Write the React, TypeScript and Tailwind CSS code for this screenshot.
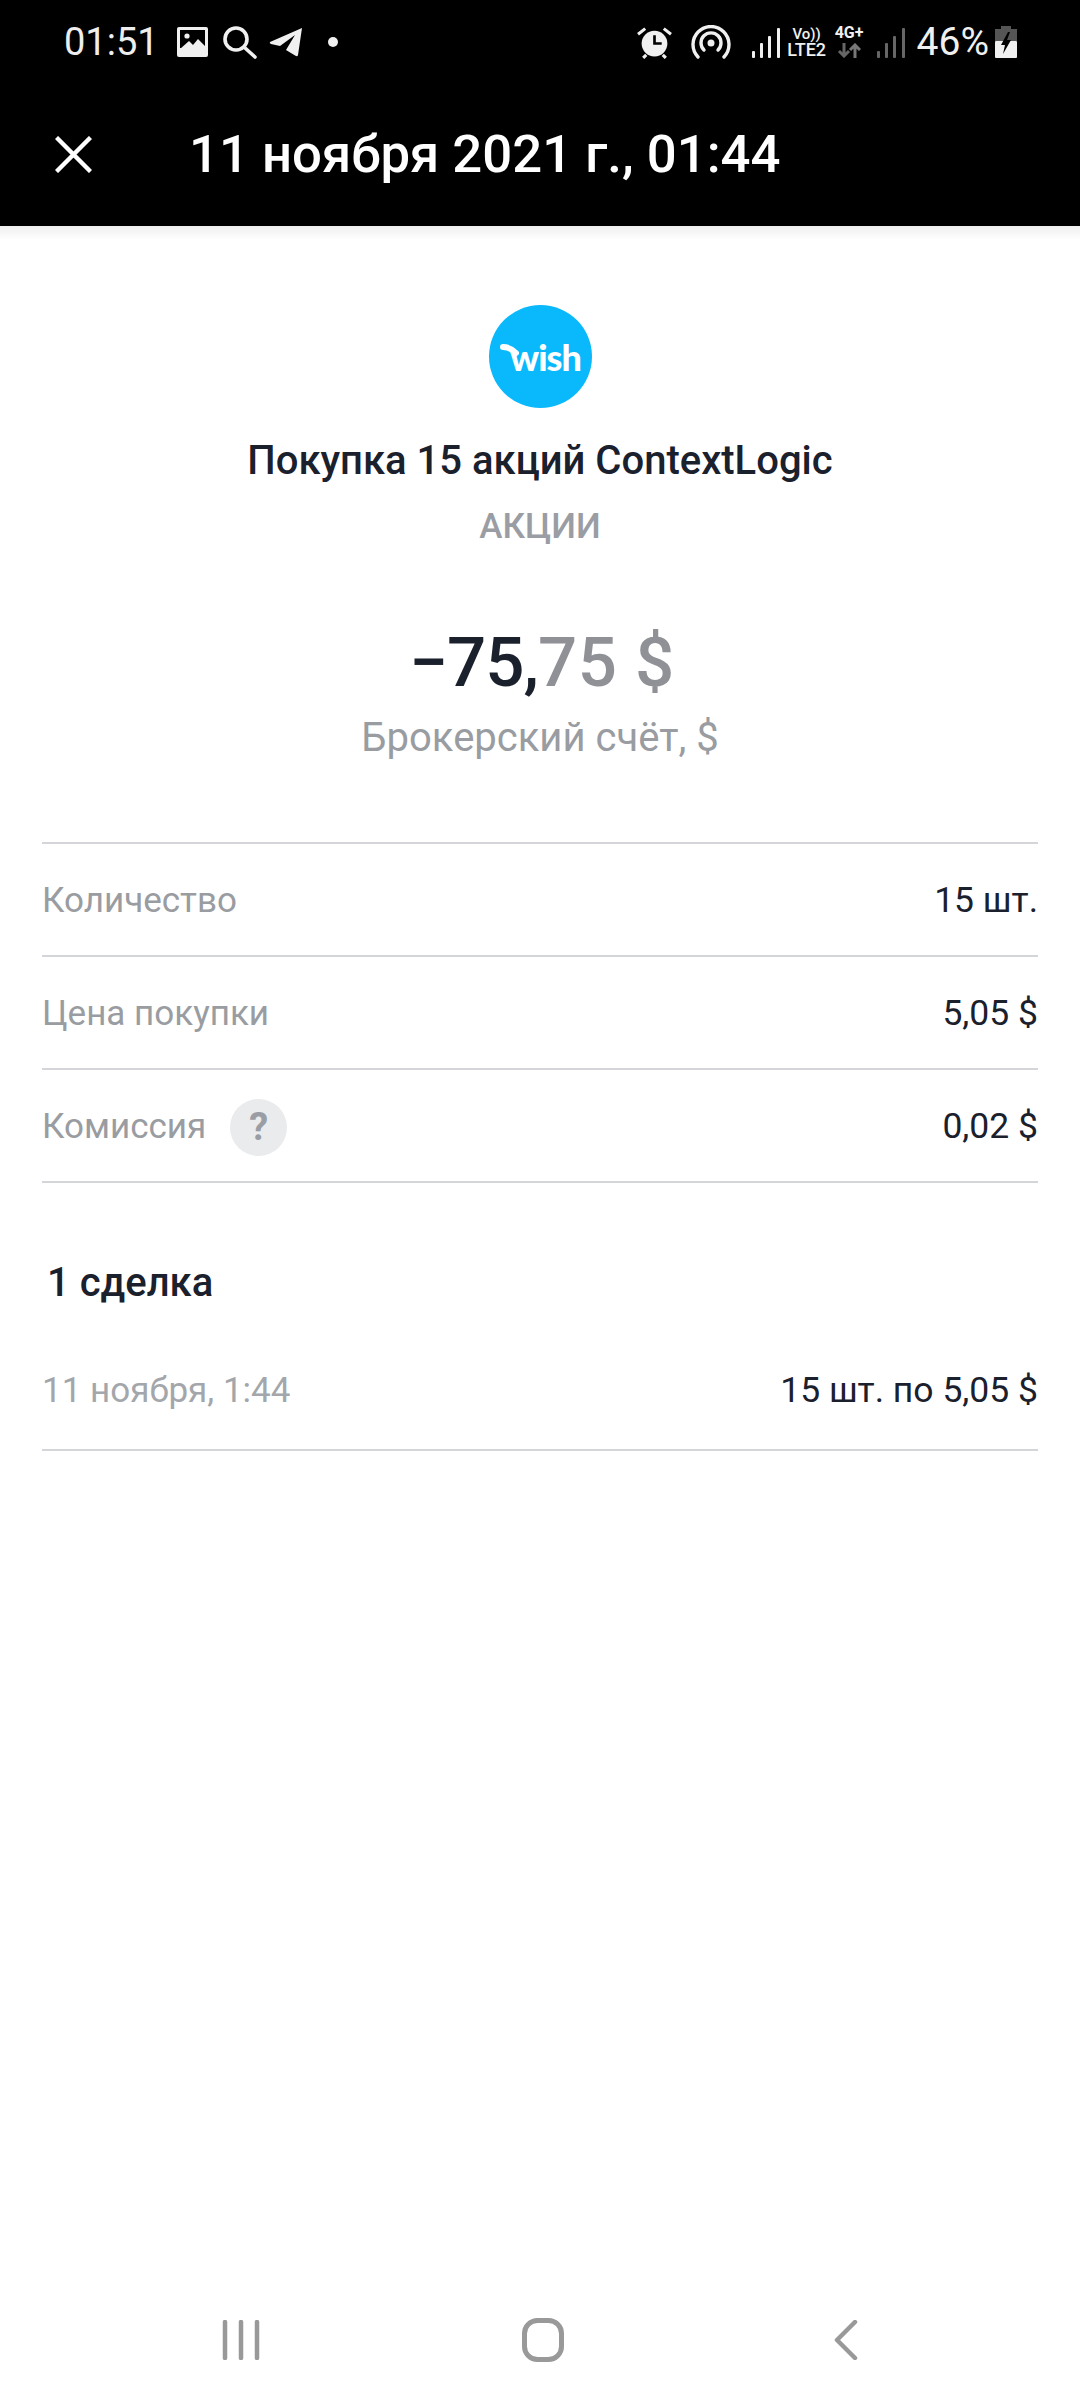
import React from 'react';

const font = { fontFamily: 'Roboto, "Noto Sans", sans-serif' };

function SignalBars({ className }: { className: string }) {
  return (
    <svg viewBox="0 0 28 30" className={className} fill="currentColor">
      <rect x="0" y="23" width="3" height="7" rx="1" />
      <rect x="8" y="15" width="3" height="15" rx="1" />
      <rect x="16" y="8" width="3" height="22" rx="1" />
      <rect x="25" y="0" width="3" height="30" rx="1" />
    </svg>
  );
}

function LeftIcons() {
  return (
    <div className="flex items-center">
      {/* gallery */}
      <svg viewBox="0 0 31 30" className="ml-[18px] w-[31px] h-[30px]">
        <rect width="31" height="30" rx="2" fill="#f0f0f0" />
        <rect x="3" y="3" width="25" height="18" fill="#000" />
        <circle cx="10" cy="9" r="2.6" fill="#f0f0f0" />
        <path d="M3 22 L12 14 L16 18 L21 12 L28 19 V24 H3 Z" fill="#f0f0f0" />
      </svg>
      {/* search */}
      <svg viewBox="0 0 35 34" className="ml-[14px] w-[35px] h-[34px]" fill="none" stroke="#f0f0f0" strokeWidth="3.6" strokeLinecap="round">
        <circle cx="14" cy="14" r="11" />
        <path d="M22.5 22.5 L33 32" />
      </svg>
      {/* telegram */}
      <svg viewBox="0 0 34 30" className="ml-[12px] w-[34px] h-[30px]" fill="#f0f0f0">
        <path d="M1 15 L33 1 L29 28 Q28.5 30 26.500 28.800 L17 23 L26 8 L11 19 L2 17 Q0 16 1 15 Z" />
      </svg>
      <span className="ml-[25px] w-[10px] h-[10px] rounded-full bg-[#f0f0f0]" />
    </div>
  );
}

function RightIcons() {
  return (
    <div className="ml-auto mr-[63px] flex items-center">
      {/* alarm */}
      <svg viewBox="0 0 34 32" className="w-[35px] h-[33px]">
        <circle cx="17" cy="17" r="12.5" fill="#f0f0f0" />
        <path d="M17 9 V17 H24" fill="none" stroke="#000" strokeWidth="2.6" />
        <path d="M1 8 L8 2.500 M33 8 L26 2.500 M6 31 L9 28 M28 31 L25 28" stroke="#f0f0f0" strokeWidth="3" />
      </svg>
      {/* hotspot */}
      <svg viewBox="0 0 40 34" className="ml-[19px] w-[40px] h-[34px]" fill="none" stroke="#f0f0f0" strokeWidth="3.4" strokeLinecap="round">
        <path d="M7 32 A 18 18 0 1 1 33 32" />
        <path d="M13 25 A 10 10 0 1 1 27 25" />
        <circle cx="20" cy="18" r="3.500" fill="#f0f0f0" stroke="none" />
      </svg>
      <SignalBars className="ml-[21px] w-[28px] h-[30px] text-[#f0f0f0] mt-[2px]" />
      <div className="ml-[6px] w-[42px] flex flex-col items-center font-medium text-[#f0f0f0] leading-[15px]">
        <span className="text-[15px]">Vo))</span>
        <span className="text-[18px]">LTE2</span>
      </div>
      <div className="ml-[4px] w-[35px] flex flex-col items-center">
        <span className="text-[16px] leading-[14px] font-bold text-[#f0f0f0]">4G+</span>
        <svg viewBox="0 0 24 15" className="w-[24px] h-[15px] mt-[3px]" fill="none" strokeWidth="3">
          <path d="M7 0 V13 M2 8 L7 13 L12 8" stroke="#666" />
          <path d="M18 15 V2 M13 7 L18 2 L23 7" stroke="#777" />
        </svg>
      </div>
      <SignalBars className="ml-[10px] w-[28px] h-[30px] text-[#666] mt-[2px]" />
      <span className="ml-[12px] text-[39px] leading-none text-[#f0f0f0]">46%</span>
      {/* battery charging */}
      <svg viewBox="0 0 22 32" className="ml-[6px] w-[22px] h-[32px]">
        <rect x="6" y="0" width="10" height="4" fill="#555" />
        <rect x="0" y="3" width="22" height="12" fill="#555" />
        <rect x="0" y="15" width="22" height="17" rx="1" fill="#f0f0f0" />
        <path d="M13 6 L6 19 H10 L8 28 L16 14 H12 L15 6 Z" fill="#000" />
      </svg>
    </div>
  );
}

function Row({ label, value, help }: { label: string; value: string; help?: boolean }) {
  return (
    <div className="h-[113px] pt-[3px] flex items-center justify-between border-b-2 border-[#d3d5d8]">
      <div className="flex items-center">
        <span className="text-[35px] text-[#999ca1]">{label}</span>
        {help && (
          <span className="ml-[24px] w-[57px] h-[57px] rounded-full bg-[#e9ebed] flex items-center justify-center text-[38px] font-bold text-[#9a9da3]">
            ?
          </span>
        )}
      </div>
      <span className="text-[35.5px] text-[#1a202c]">{value}</span>
    </div>
  );
}

export default function App() {
  return (
    <div className="w-[1080px] h-[2400px] flex flex-col bg-white overflow-hidden" style={font}>
      <header className="h-[226px] bg-black shrink-0">
        <div className="h-[84px] flex items-center pl-[64px]">
          <span className="text-[38px] leading-none text-[#eeeeee]">01:51</span>
          <LeftIcons />
          <RightIcons />
        </div>
        <div className="h-[140px] flex items-center pl-[55px]">
          <svg viewBox="0 0 37 37" className="w-[37px] h-[37px]" fill="none" stroke="#fff" strokeWidth="4.4">
            <path d="M1.500 1.500 L35.500 35.500 M35.500 1.500 L1.500 35.500" />
          </svg>
          <h1 className="ml-[97px] mt-[2px] text-[52.7px] font-medium text-white whitespace-nowrap">11 ноября 2021 г., 01:44</h1>
        </div>
      </header>
      <div className="h-[14px] -mb-[14px] shrink-0 bg-gradient-to-b from-[#efefef] to-white" />

      <main className="flex flex-col flex-1 px-[42px]">
        <div className="flex flex-col items-center">
          {/* wish logo */}
          <div className="relative mt-[79px] w-[103px] h-[103px] rounded-full bg-[#0ab9fc] flex items-center justify-center">
            <span className="ml-[11px] text-[36px] font-black tracking-[-1px] text-white leading-none" style={{ fontFamily: 'Lato, sans-serif' }}>
              wish
            </span>
            <svg viewBox="0 0 103 103" className="absolute inset-0 w-[103px] h-[103px]" fill="none" stroke="#fff" strokeWidth="6" strokeLinecap="round">
              <path d="M14 42 C 19 42 23 44 27 48" />
            </svg>
          </div>
          <div className="mt-[23px] text-[40px] leading-[60px] font-medium text-[#1a202c]">Покупка 15 акций ContextLogic</div>
          <div className="mt-[6px] text-[35px] leading-[60px] font-medium text-[#9a9da3]">АКЦИИ</div>
          <div className="mt-[61px] ml-[4px] text-[69px] leading-[90px] font-medium text-[#8f9196] tracking-[0.5px] whitespace-pre">
            <span className="text-[#1a202c] tracking-[-1px]">−75,</span>75 $
          </div>
          <div className="mt-[5px] text-[40px] leading-[50px] text-[#999ca1]">Брокерский счёт, $</div>
        </div>

        <div className="mt-[79px] border-t-2 border-[#d3d5d8]">
          <Row label="Количество" value="15 шт." />
          <Row label="Цена покупки" value="5,05 $" />
          <Row label="Комиссия" value="0,02 $" help />
        </div>

        <h2 className="mt-[70px] pl-[5px] text-[40px] leading-[60px] font-medium text-[#1a202c]">1 сделка</h2>
        <div className="mt-[8px] h-[130px] pt-[12px] flex items-center justify-between border-b-2 border-[#d3d5d8]">
          <span className="text-[35px] text-[#a3a6ab]">11 ноября, 1:44</span>
          <span className="text-[35.5px] text-[#1a202c]">15 шт. по 5,05 $</span>
        </div>

        <nav className="mt-auto mb-[38px] flex items-center justify-between pl-[180px] pr-[180px]">
          <svg viewBox="0 0 38 40" className="w-[38px] h-[40px]" stroke="#999" strokeWidth="4.5" strokeLinecap="round">
            <path d="M3 2 V38 M19 2 V38 M35 2 V38" />
          </svg>
          <svg viewBox="0 0 42 44" className="mr-[8px] w-[42px] h-[44px]" fill="none" stroke="#999" strokeWidth="5">
            <rect x="2.500" y="2.500" width="37" height="39" rx="13" />
          </svg>
          <svg viewBox="0 0 24 40" className="w-[24px] h-[40px]" fill="none" stroke="#999" strokeWidth="4.5" strokeLinecap="round" strokeLinejoin="round">
            <path d="M21 2 L3 20 L21 38" />
          </svg>
        </nav>
      </main>
    </div>
  );
}
